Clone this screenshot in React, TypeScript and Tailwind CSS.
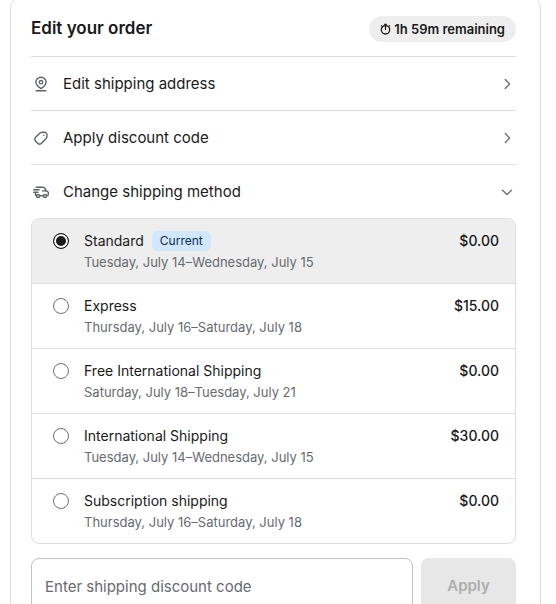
import { useState, type ReactNode } from "react";

type ShippingMethod = {
  id: string;
  name: string;
  dates: string;
  price: string;
  current?: boolean;
};

const METHODS: ShippingMethod[] = [
  {
    id: "standard",
    name: "Standard",
    dates: "Tuesday, July 14–Wednesday, July 15",
    price: "$0.00",
    current: true,
  },
  {
    id: "express",
    name: "Express",
    dates: "Thursday, July 16–Saturday, July 18",
    price: "$15.00",
  },
  {
    id: "free-international",
    name: "Free International Shipping",
    dates: "Saturday, July 18–Tuesday, July 21",
    price: "$0.00",
  },
  {
    id: "international",
    name: "International Shipping",
    dates: "Tuesday, July 14–Wednesday, July 15",
    price: "$30.00",
  },
  {
    id: "subscription",
    name: "Subscription shipping",
    dates: "Thursday, July 16–Saturday, July 18",
    price: "$0.00",
  },
];

function Icon({ children, className }: { children: ReactNode; className: string }) {
  return (
    <svg
      viewBox="0 0 16 16"
      fill="none"
      stroke="currentColor"
      strokeWidth="1.4"
      strokeLinecap="round"
      strokeLinejoin="round"
      aria-hidden="true"
      className={className}
    >
      {children}
    </svg>
  );
}

function PinIcon() {
  return (
    <Icon className="size-4 shrink-0 text-[#5f6368]">
      <path d="M8 12.6C6.2 11.5 2.9 9.2 2.9 6.1a5.1 4.9 0 0 1 10.2 0c0 3.1-3.3 5.4-5.1 6.5Z" />
      <circle cx="8" cy="6.2" r="1.7" />
      <path d="M3.2 14.8h9.6" />
    </Icon>
  );
}

function TagIcon() {
  return (
    <Icon className="size-4 shrink-0 text-[#5f6368]">
      <path d="M7 3 2.6 7.3c-1 1-1.1 2.3-.4 3.4.8 1.2 1.8 2.2 3 3 1.1.7 2.4.6 3.3-.4l4.4-4.6c.6-.6.9-1.3 1-2.1l.1-1.4c.1-1.8-1.2-3.1-3-3l-1.8.1C8.4 2.3 7.6 2.5 7 3Z" />
      <circle cx="10.8" cy="5.3" r="0.8" fill="currentColor" stroke="none" />
    </Icon>
  );
}

function TruckIcon() {
  return (
    <Icon className="size-4 shrink-0 text-[#5f6368]">
      <path d="M3.2 3.2h6.6c1 0 1.7.4 2.1 1.2l1.2 2.5 1.1.4c.7.3 1.1.8 1.1 1.5v1.7c0 .6-.4 1-1 1.1" />
      <path d="M9.7 11.7H7M2.5 9.4v1c0 .6.2 1 .7 1.2M9.5 6.9h3.4" />
      <path d="M.7 5.7h5.5M.7 8.2h4.2" />
      <circle cx="5" cy="12" r="1.5" />
      <circle cx="12" cy="12" r="1.5" />
    </Icon>
  );
}

function ChevronIcon({ open }: { open: boolean }) {
  return (
    <Icon className="size-4 shrink-0 text-[#707070]">
      {open ? <path d="m3.5 6.2 4.5 4.2 4.5-4.2" /> : <path d="m6.3 3.5 4.3 4.5-4.3 4.5" />}
    </Icon>
  );
}

function TimerIcon() {
  return (
    <svg viewBox="0 0 11 12" fill="none" stroke="currentColor" aria-hidden="true" className="h-3 w-[11px]">
      <circle cx="5.5" cy="6.8" r="4.2" strokeWidth="1.3" />
      <path d="M5.5 1v6M4.2 1.3h2.6M8.9 2.3l1 1M2.1 2.3l-1 1" strokeWidth="1.2" />
    </svg>
  );
}

type SectionButtonProps = {
  icon: ReactNode;
  label: string;
  open?: boolean;
  onClick?: () => void;
};

function SectionButton({ icon, label, open = false, onClick }: SectionButtonProps) {
  return (
    <button
      type="button"
      aria-expanded={open}
      onClick={onClick}
      className="flex w-full cursor-pointer items-center border-t border-[#dedede] py-[15px] pr-px pl-[2px] text-left"
    >
      {icon}
      <span className="ml-[14px] flex-1 text-[15px] leading-[23px]">{label}</span>
      <ChevronIcon open={open} />
    </button>
  );
}

export default function App() {
  const [selected, setSelected] = useState("standard");
  const [open, setOpen] = useState(true);
  const [code, setCode] = useState("");

  return (
    <main className="flow-root bg-white pr-[15px] pl-[10px] font-['Inter',sans-serif] text-[#1a1a1a]">
      <section className="-mt-1 rounded-xl border border-[#dedede] pt-[19px] pr-6 pb-5 pl-5">
        <header className="flex items-start justify-between pb-[14px]">
          <h1 className="text-[17px] leading-6 font-semibold">Edit your order</h1>
          <p className="flex items-center gap-[3px] rounded-full bg-[#eeeeee] px-[11px] text-[13px] leading-[26px] font-semibold">
            <TimerIcon />
            1h 59m remaining
          </p>
        </header>

        <SectionButton icon={<PinIcon />} label="Edit shipping address" />
        <SectionButton icon={<TagIcon />} label="Apply discount code" />
        <SectionButton
          icon={<TruckIcon />}
          label="Change shipping method"
          open={open}
          onClick={() => setOpen(!open)}
        />

        {open && (
          <form onSubmit={(event) => event.preventDefault()}>
            <fieldset
              aria-label="Shipping method"
              className="divide-y divide-[#dedede] overflow-hidden rounded-lg border border-[#dedede]"
            >
              {METHODS.map((method) => (
                <label
                  key={method.id}
                  htmlFor={method.id}
                  className="flex items-start pt-3 pr-4 pb-[10px] pl-[21px] has-checked:bg-[#eeeeee]"
                >
                  <input
                    id={method.id}
                    type="radio"
                    name="shipping-method"
                    value={method.id}
                    checked={selected === method.id}
                    onChange={() => setSelected(method.id)}
                    className="mt-[2px] size-4 shrink-0 appearance-none rounded-full border border-[#707070] bg-white checked:border-[#1a1a1a] checked:bg-[#1a1a1a] checked:shadow-[inset_0_0_0_2px_#ffffff]"
                  />
                  <span className="ml-[15px] flex-1">
                    <span className="flex items-center gap-2 text-sm leading-5">
                      {method.name}
                      {method.current && (
                        <span className="rounded-md bg-[#d1e7ff] px-2 text-xs leading-5 text-[#0b2f52]">
                          Current
                        </span>
                      )}
                    </span>
                    <span className="block text-[13px] leading-[22px] text-[#666b70]">{method.dates}</span>
                  </span>
                  <span className="text-sm leading-5 font-medium">{method.price}</span>
                </label>
              ))}
            </fieldset>

            <div className="mt-[14px] flex gap-2">
              <input
                type="text"
                aria-label="Enter shipping discount code"
                placeholder="Enter shipping discount code"
                value={code}
                onChange={(event) => setCode(event.target.value)}
                className="min-w-0 flex-1 rounded-lg border border-[#c0c0c0] px-[13px] py-4 text-[15px] leading-6 placeholder:text-[#666b70]"
              />
              <button
                type="submit"
                disabled={!code}
                className="w-[95px] rounded-lg bg-[#1a1a1a] pb-px text-[15px] font-semibold text-white disabled:bg-[#e7e7e7] disabled:text-[#adadad]"
              >
                Apply
              </button>
            </div>
          </form>
        )}
      </section>
    </main>
  );
}
